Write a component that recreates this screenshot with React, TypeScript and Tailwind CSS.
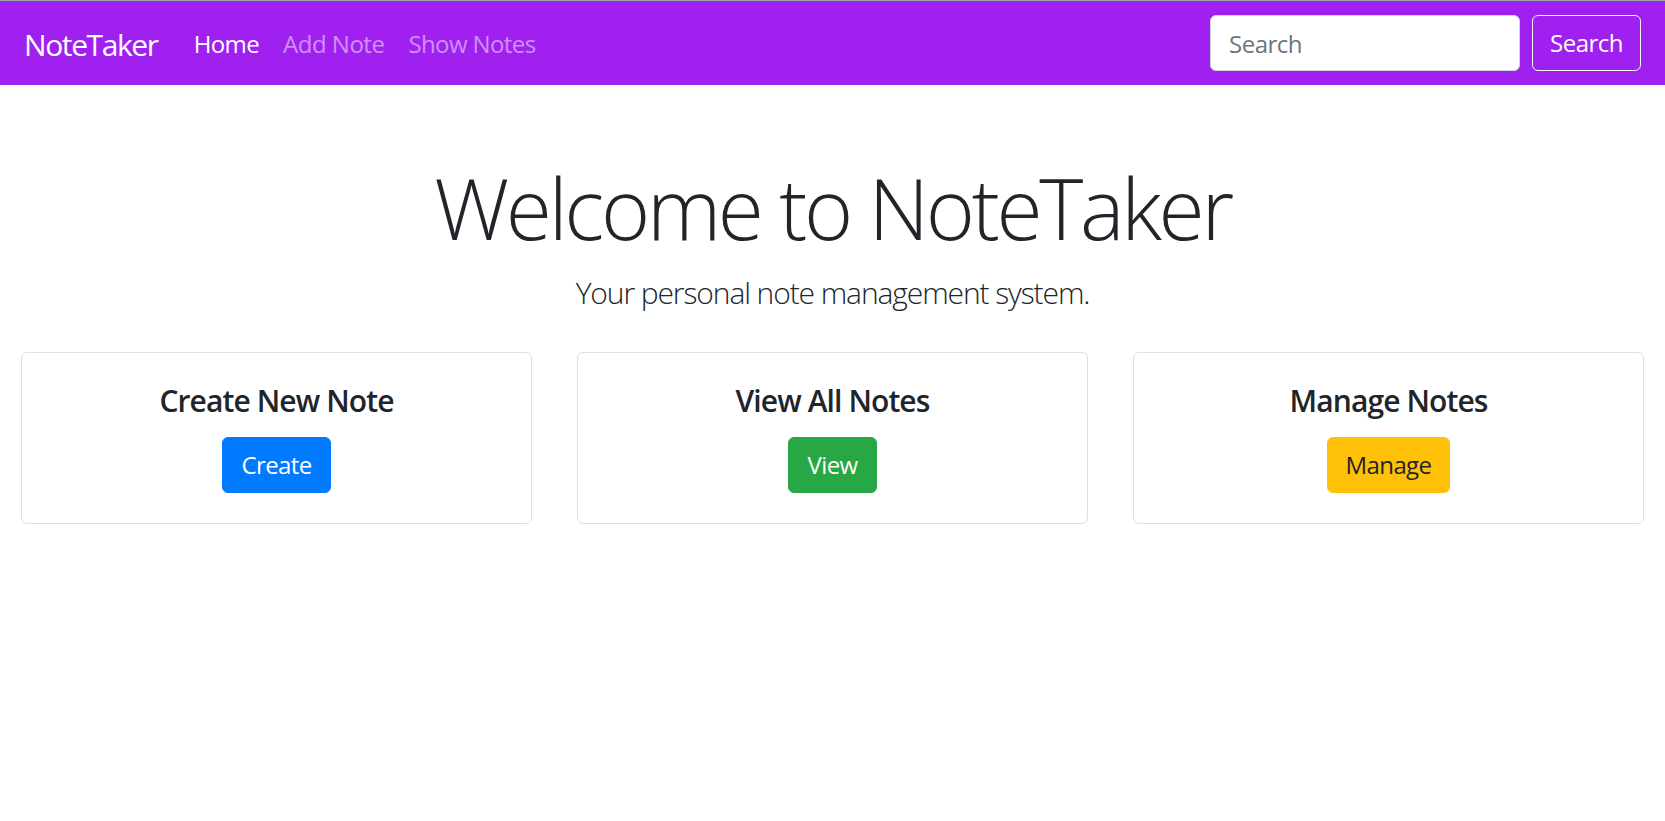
import React from "react";

const cards = [
  { title: "Create New Note", label: "Create", btn: "bg-[#007bff] border-[#007bff] text-white" },
  { title: "View All Notes", label: "View", btn: "bg-[#28a745] border-[#28a745] text-white" },
  { title: "Manage Notes", label: "Manage", btn: "bg-[#ffc107] border-[#ffc107] text-[#212529]" },
];

export default function App() {
  return (
    <div className="min-h-screen bg-white font-['Open_Sans','Noto_Sans',sans-serif] text-[#212529]">
      <nav className="flex h-[85px] items-center justify-between border-t border-[#9aa5b1] bg-[#a020f0] px-[24px]">
        <div className="flex items-center pt-[2px]">
          <a className="mr-[24px] text-[30px] leading-[45px] tracking-[-1.4px] text-white">NoteTaker</a>
          <ul className="flex">
            <li>
              <a className="block px-[12px] text-[24px] leading-[36px] tracking-[-0.6px] text-white">Home</a>
            </li>
            <li>
              <a className="block px-[12px] text-[24px] leading-[36px] tracking-[-0.5px] text-white/50">Add Note</a>
            </li>
            <li>
              <a className="block px-[12px] text-[24px] leading-[36px] tracking-[-0.6px] text-white/50">Show Notes</a>
            </li>
          </ul>
        </div>
        <form className="flex items-center" onSubmit={(e) => e.preventDefault()}>
          <input
            type="search"
            placeholder="Search"
            className="mr-[12px] h-[56px] w-[310px] rounded-[6px] border border-[#ced4da] bg-white px-[18px] text-[24px] tracking-[-0.5px] text-[#495057] outline-none placeholder:text-[#6c757d]"
          />
          <button className="h-[56px] w-[109px] rounded-[6px] border border-[#f8f9fa] text-[24px] tracking-[-0.5px] text-white">
            Search
          </button>
        </form>
      </nav>

      <main className="pt-[72px]">
        <h1 className="mb-[12px] text-center text-[84px] font-light leading-[101px] tracking-[-3.3px]">
          Welcome to NoteTaker
        </h1>
        <p className="text-center text-[30px] font-light leading-[45px] tracking-[-1.1px]">
          Your personal note management system.
        </p>

        <div className="mt-[37px] grid grid-cols-3 gap-[45px] px-[21px]">
          {cards.map((c) => (
            <div key={c.title} className="rounded-[6px] border border-[#dfdfdf] p-[30px] text-center">
              <h5 className="mb-[18px] text-[30px] font-semibold leading-[36px] tracking-[-0.9px]">{c.title}</h5>
              <button
                className={`inline-block rounded-[6px] border px-[18px] py-[9px] text-[24px] leading-[36px] tracking-[-0.6px] ${c.btn}`}
              >
                {c.label}
              </button>
            </div>
          ))}
        </div>
      </main>
    </div>
  );
}
